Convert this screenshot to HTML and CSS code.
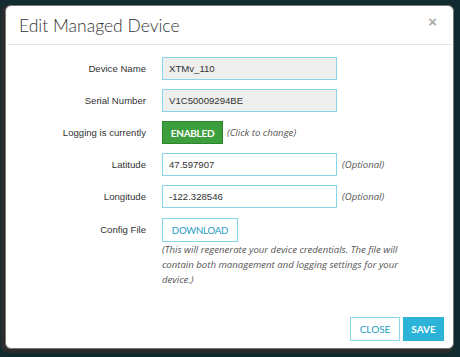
FILE: index.html
```html
<!DOCTYPE html>
<html>
<head>
    <title>Edit Managed Device</title>
    <meta name="viewport" content="width=device-width, initial-scale=1.0">
    <link rel="stylesheet" href="styles.css">
</head>
<body>
    <div class="modal">
        <div class="modal-header">
            <h4 class="modal-title">Edit Managed Device</h4>
            <span class="close">&times;</span>
        </div>

        <div class="modal-body">
            <label class="field-label">Device Name</label>
            <div class="field">
                <input class="text-input" type="text" value="XTMv_110" disabled>
            </div>

            <label class="field-label">Serial Number</label>
            <div class="field">
                <input class="text-input" type="text" value="V1C50009294BE" disabled>
            </div>

            <label class="field-label">Logging is currently</label>
            <div class="field">
                <button class="btn-enabled">ENABLED</button>
                <span class="hint">(Click to change)</span>
            </div>

            <label class="field-label">Latitude</label>
            <div class="field">
                <input class="text-input" type="text" value="47.597907">
                <span class="hint">(Optional)</span>
            </div>

            <label class="field-label">Longitude</label>
            <div class="field">
                <input class="text-input" type="text" value="-122.328546">
                <span class="hint">(Optional)</span>
            </div>

            <label class="field-label config-label">Config File</label>
            <div class="field field-stack">
                <button class="btn-outline btn-download">DOWNLOAD</button>
                <p class="help-text">(This will regenerate your device credentials. The file will contain both management and logging settings for your device.)</p>
            </div>
        </div>

        <div class="modal-footer">
            <button class="btn-outline">CLOSE</button>
            <button class="btn-save">SAVE</button>
        </div>
    </div>
</body>
</html>
```

FILE: styles.css
```css
/* page behind the dialog */
body {
    margin: 0;
    padding: 5px;
    background: #112b30;
    font-family: 'Liberation Sans', Arial, sans-serif;
    font-size: 9.6px;
    color: #333;
}

.modal {
    box-sizing: border-box;
    width: 449px;
    height: 344px;
    background: #fff;
    border: 1px solid #777;
    border-radius: 6px;
    box-shadow: -2px 2px 0 2px #2b2b2b;
    display: flex;
    flex-direction: column;
}

/* header */
.modal-header {
    height: 38px;
    border-bottom: 1px solid #e5e5e5;
    margin: 0 2px;
    padding: 0 11px;
    display: flex;
    align-items: center;
    justify-content: space-between;
}

.modal-title {
    margin: 0;
    font-family: 'Lato', sans-serif;
    font-weight: 300;
    font-size: 17.5px;
    color: #333;
}

.close {
    color: #aaa;
    font-family: 'Liberation Sans', Arial, sans-serif;
    font-size: 15px;
    font-weight: bold;
    margin-top: -8px;
    margin-right: 3px;
}

/* form grid */
.modal-body {
    display: grid;
    grid-template-columns: 126px 1fr;
    column-gap: 16px;
    row-gap: 9px;
    padding: 12px 14px 0;
}

.field-label {
    text-align: right;
    line-height: 23px;
    height: 23px;
}

.config-label {
    margin-top: 1px;
}

.field {
    display: flex;
    align-items: center;
    gap: 5px;
}

.field-stack {
    flex-direction: column;
    align-items: flex-start;
    gap: 0;
    margin-top: 1px;
}

.text-input {
    box-sizing: border-box;
    width: 175px;
    height: 23px;
    padding: 0 6px;
    border: 1px solid #86d6e8;
    font-family: 'Liberation Sans', Arial, sans-serif;
    font-size: 9.6px;
    color: #333;
    background: #fff;
    outline: none;
}

.text-input:disabled {
    background: #eee;
    color: #333;
}

.hint {
    font-family: 'Open Sans', sans-serif;
    font-style: italic;
    font-size: 9.6px;
    color: #555;
}

.btn-enabled {
    box-sizing: border-box;
    width: 61px;
    height: 23px;
    margin-right: -1px;
    background: #3d9e3d;
    border: 1px solid #2b862b;
    color: #fff;
    font-family: 'Lato', sans-serif;
    font-weight: bold;
    font-size: 10px;
    letter-spacing: -0.3px;
    padding: 0;
}

/* buttons */
.btn-outline {
    box-sizing: border-box;
    height: 24px;
    padding: 0 9px;
    background: #fff;
    border: 1px solid #88d8ea;
    color: #1f9dc2;
    font-family: 'Lato', sans-serif;
    font-size: 10px;
}

.btn-download {
    width: 76px;
    padding: 0;
    font-size: 9.6px;
    letter-spacing: -0.2px;
}

.btn-save {
    box-sizing: border-box;
    height: 24px;
    width: 41px;
    padding: 0;
    background: #2bb4d8;
    border: 1px solid #2bb4d8;
    color: #fff;
    font-family: 'Lato', sans-serif;
    font-weight: bold;
    font-size: 10px;
}

.help-text {
    margin: 0;
    width: 256px;
    font-family: 'Open Sans', sans-serif;
    font-style: italic;
    font-size: 9.6px;
    line-height: 15px;
    color: #555;
}

/* footer */
.modal-footer {
    margin-top: auto;
    display: flex;
    justify-content: flex-end;
    gap: 3px;
    padding: 0 9px 7px;
}

.modal-footer .btn-outline {
    width: 50px;
    padding: 0;
}
```
